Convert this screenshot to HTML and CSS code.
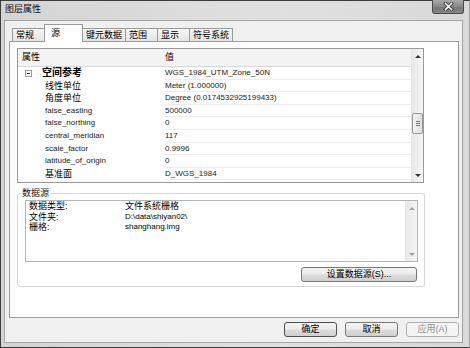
FILE: index.html
```html
<!DOCTYPE html>
<html lang="zh">
<head>
    <meta charset="utf-8">
    <link rel="stylesheet" href="styles.css">
</head>
<body>
    <div class="window">
        <div class="titlebar">
            <span class="title">图层属性</span>
            <div class="close">
                <svg width="11" height="9" viewBox="0 0 11 9">
                    <path d="M2.5 1.5 L8.5 7.5 M8.5 1.5 L2.5 7.5" stroke="#3a3a3a" stroke-width="3.4" stroke-linecap="square"/>
                    <path d="M2.5 1.5 L8.5 7.5 M8.5 1.5 L2.5 7.5" stroke="#ffffff" stroke-width="1.6" stroke-linecap="square"/>
                </svg>
            </div>
        </div>
        <div class="client">
            <div class="tabs">
                <div class="tab">常规</div>
                <div class="tab active">源</div>
                <div class="tab">键元数据</div>
                <div class="tab">范围</div>
                <div class="tab">显示</div>
                <div class="tab">符号系统</div>
            </div>
            <div class="panel">
                <div class="grid">
                    <div class="grid-body">
                        <div class="grid-head">
                            <div class="c1">属性</div>
                            <div class="c2">值</div>
                        </div>
                        <div id="rows"></div>
                    </div>
                    <div class="vscroll">
                        <div class="arrow up"></div>
                        <div class="track">
                            <div class="thumb"><span></span></div>
                        </div>
                        <div class="arrow down"></div>
                    </div>
                </div>
                <fieldset class="group">
                    <legend>数据源</legend>
                    <div class="infobox">
                        <div class="info">
                            <div class="line"><span class="k">数据类型:</span><span>文件系统栅格</span></div>
                            <div class="line"><span class="k">文件夹:</span><span class="en">D:\data\shiyan02\</span></div>
                            <div class="line"><span class="k">栅格:</span><span class="en">shanghang.img</span></div>
                        </div>
                        <div class="vscroll light">
                            <div class="arrow up"></div>
                            <div class="track"></div>
                            <div class="arrow down"></div>
                        </div>
                    </div>
                    <div class="actions">
                        <button class="btn wide">设置数据源(S)...</button>
                    </div>
                </fieldset>
            </div>
            <div class="footer">
                <button class="btn default">确定</button>
                <button class="btn">取消</button>
                <button class="btn" disabled>应用(A)</button>
            </div>
        </div>
    </div>

    <script>
        var rowsObj = document.getElementById("rows");
        var props = [
            { name: "空间参考", value: "WGS_1984_UTM_Zone_50N", group: true },
            { name: "线性单位", value: "Meter (1.000000)", zh: true },
            { name: "角度单位", value: "Degree (0.0174532925199433)", zh: true },
            { name: "false_easting", value: "500000" },
            { name: "false_northing", value: "0" },
            { name: "central_meridian", value: "117" },
            { name: "scale_factor", value: "0.9996" },
            { name: "latitude_of_origin", value: "0" },
            { name: "基准面", value: "D_WGS_1984", zh: true },
        ];

        render();

        function render() {
            var tmp = '';
            for (var i = 0; i < props.length; i++) {
                var p = props[i];
                if (p.group) {
                    tmp += `<div class="row">
                        <div class="c1 grouphead"><span class="expander"></span><span class="gname">${p.name}</span></div>
                        <div class="c2">${p.value}</div>
                    </div>`;
                } else {
                    tmp += `<div class="row">
                        <div class="c1 ${p.zh ? 'zh' : 'en'}">${p.name}</div>
                        <div class="c2">${p.value}</div>
                    </div>`;
                }
            }
            rowsObj.innerHTML = tmp;
        }
    </script>
</body>
</html>
```

FILE: styles.css
```css
* {
    box-sizing: border-box;
}
body {
    margin: 0;
    font-family: "Liberation Sans", "Noto Sans CJK SC", sans-serif;
    font-size: 9px;
    color: #000;
}
.window {
    width: 470px;
    height: 348px;
    border: 1px solid #3c3c3c;
    border-right-color: #a0a0a0;
    background: linear-gradient(90deg, #d4d4d4, #e0e0e0 60%, #d8d8d8);
    padding: 0 6px 4px 3px;
    display: flex;
    flex-direction: column;
}
.titlebar {
    height: 19px;
    display: flex;
    align-items: flex-start;
}
.title {
    padding: 2px 0 0 1px;
    line-height: 12px;
    color: #111;
}
.close {
    margin-left: auto;
    margin-top: -1px;
    margin-right: -1px;
    width: 32px;
    height: 14px;
    border: 1px solid #4a4a4a;
    border-top: none;
    border-radius: 0 0 3px 3px;
    background: linear-gradient(#a8a8a8, #8a8a8a 50%, #727272 51%, #888888);
    display: flex;
    align-items: center;
    justify-content: center;
}
.client {
    flex: 1;
    border: 1px solid #a5a5a5;
    background: #f0f0f0;
    padding: 3px 3px 0 4px;
    display: flex;
    flex-direction: column;
}
.tabs {
    height: 18px;
    margin-bottom: -1px;
    padding-left: 3px;
    display: flex;
    align-items: flex-end;
    position: relative;
    z-index: 1;
}
.tab {
    height: 13px;
    margin-bottom: 1px;
    min-width: 33px;
    padding: 0 3px 0 3px;
    border: 1px solid #9a9a9a;
    border-bottom: none;
    margin-right: -1px;
    background: linear-gradient(#f6f6f6, #e4e4e4);
    line-height: 12px;
}
.tab.active {
    height: 18px;
    margin-bottom: 0;
    min-width: 39px;
    padding-left: 6px;
    background: #fff;
    line-height: 16px;
    position: relative;
    z-index: 2;
}
.panel {
    flex: 1;
    border: 1px solid #9c9c9c;
    background: #fff;
    padding: 6px 0 0 7px;
}
.grid {
    width: 407px;
    height: 135px;
    border: 1px solid #999;
    display: flex;
}
.grid-body {
    flex: 1;
    overflow: hidden;
}
.grid-head {
    height: 18px;
    display: flex;
    background: #f3f3f3;
    border-bottom: 1px solid #d8d8d8;
    line-height: 17px;
}
.grid-head .c1 {
    padding-left: 4px;
}
.row {
    height: 12.6px;
    display: flex;
    line-height: 12px;
}
.c1 {
    width: 147px;
    flex-shrink: 0;
    padding-left: 27px;
}
.c2 {
    flex: 1;
}
.row .c2 {
    font-size: 8px;
    color: #1a1a1a;
    border-bottom: 1px solid #ececec;
}
.c1.en {
    font-size: 8px;
    color: #222;
}
.grouphead {
    padding-left: 7px;
    display: flex;
    align-items: center;
}
.expander {
    width: 7px;
    height: 7px;
    border: 1px solid #9a9a9a;
    margin-right: 10px;
    display: flex;
    align-items: center;
    justify-content: center;
}
.expander::before {
    content: "";
    width: 3px;
    height: 1px;
    background: #333;
}
.gname {
    font-size: 10px;
    font-weight: bold;
}
.vscroll {
    width: 12px;
    display: flex;
    flex-direction: column;
    background: linear-gradient(90deg, #e8e8e8, #f5f5f5);
    border-left: 1px solid #e4e4e4;
}
.arrow {
    height: 14px;
    display: flex;
    align-items: center;
    justify-content: center;
}
.arrow::before {
    content: "";
    border-left: 3px solid transparent;
    border-right: 3px solid transparent;
}
.arrow.up::before {
    border-bottom: 3px solid #333;
}
.arrow.down::before {
    border-top: 3px solid #333;
}
.track {
    flex: 1;
}
.thumb {
    margin: 50px 0 0 0;
    height: 21px;
    border: 1px solid #979797;
    border-radius: 2px;
    background: linear-gradient(90deg, #f4f4f4, #dedede);
    display: flex;
    align-items: center;
    justify-content: center;
}
.thumb span {
    width: 4px;
    height: 5px;
    background: repeating-linear-gradient(#777 0 1px, transparent 1px 2px);
}
.vscroll.light .arrow.up::before {
    border-bottom-color: #a0a0a0;
}
.vscroll.light .arrow.down::before {
    border-top-color: #a0a0a0;
}
.group {
    width: 408px;
    margin: 4px 0 0 0;
    border: 1px solid #d5d5d5;
    border-radius: 3px;
    padding: 1px 6px 4px 7px;
}
.group legend {
    padding: 0 2px;
    margin-left: -5px;
    line-height: 12px;
    color: #111;
}
.infobox {
    height: 62px;
    border: 1px solid #b5b5b5;
    display: flex;
}
.info {
    flex: 1;
    padding-left: 3px;
}
.line {
    line-height: 10.6px;
    display: flex;
}
.k {
    width: 96px;
}
.en {
    font-size: 8px;
}
.actions {
    display: flex;
    justify-content: flex-end;
    margin-top: 5px;
    padding-right: 1px;
}
.btn {
    height: 15px;
    padding: 0;
    border: 1px solid #777;
    border-radius: 3px;
    background: linear-gradient(#f3f3f3, #ebebeb 48%, #dcdcdc 52%, #cfcfcf);
    font-family: inherit;
    font-size: 9px;
    line-height: 13px;
    color: #000;
}
.btn.wide {
    width: 116px;
}
.footer {
    height: 24px;
    padding: 4px 0 5px;
    display: flex;
    justify-content: flex-end;
    gap: 8px;
}
.footer .btn {
    width: 53px;
}
.btn.default {
    border-color: #505050;
}
.btn:disabled {
    border-color: #b0b0b0;
    background: #f4f4f4;
    color: #8f8f8f;
}
```
